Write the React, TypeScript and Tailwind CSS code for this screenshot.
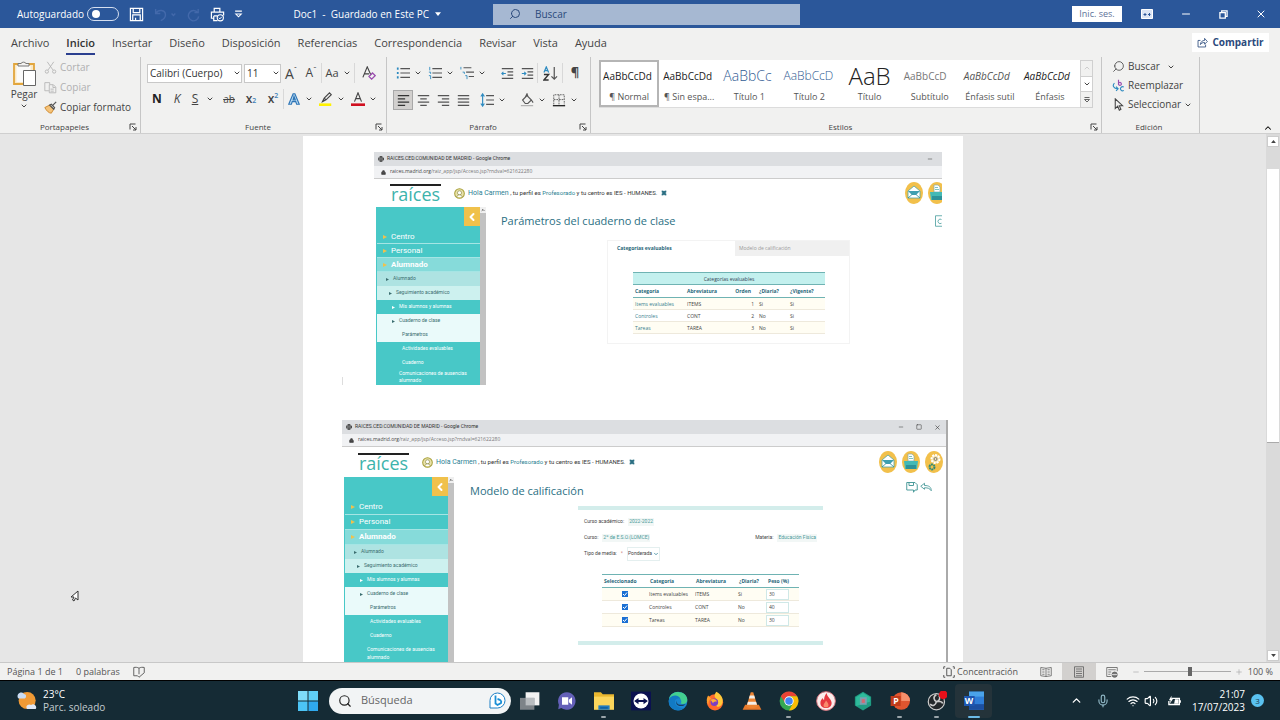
import React from 'react';
import { ChevronDown, ChevronUp, ChevronLeft, Minus, Plus, X, Search, Wifi, Volume2, Mic, Square, Lock, Globe } from 'lucide-react';

interface SvgProps {
  className?: string;
  box?: string;
  children: React.ReactNode;
}

const Svg: React.FC<SvgProps> = ({ className = 'size-4', box = '0 0 16 16', children }) => (
  <svg viewBox={box} className={`shrink-0 ${className}`} fill="none" stroke="currentColor" aria-hidden="true">
    {children}
  </svg>
);

const Chevron = () => <ChevronDown className="size-2 shrink-0 text-[#444]" strokeWidth={3} />;

const Divider = () => <span className="h-5 w-px bg-[#d8d8d8]" />;

interface ToolProps {
  label: string;
  width?: string;
  className?: string;
  children: React.ReactNode;
}

const Tool: React.FC<ToolProps> = ({ label, width = 'w-5', className = '', children }) => (
  <button type="button" aria-label={label} className={`flex h-5 shrink-0 items-center justify-center gap-1 ${width} ${className}`}>
    {children}
  </button>
);

/* ---------- title bar ---------- */

const TitleBar = () => (
  <header className="grid h-7 shrink-0 grid-cols-[493fr_307fr_480fr] items-center bg-[#2b579a] text-[10px] text-white">
    <div className="flex items-center pl-[17px]">
      <span className="w-[70px]">Autoguardado</span>
      <button type="button" role="switch" aria-checked="false" aria-label="Autoguardado" className="flex h-[14px] w-8 items-center rounded-full border border-[#d5dff0] pl-1">
        <span className="size-2 rounded-full bg-white" />
      </button>
      <div className="flex items-center gap-[9px] pl-[10px]">
        <Svg className="size-[15px]">
          <path d="M1.5 1.5h13v13h-13zM4.5 1.5v4.500h7v-4.500M4 14.500v-6h8v6M7 14.500v-3" strokeWidth="1.300" />
        </Svg>
        <Svg className="h-[15px] w-6 text-[#4369ab]" box="0 0 24 16">
          <path d="M2 2v5h5M2.500 6.500c2-4 10-4 10 2 0 3-3 5-5 6M19 7l2 2 2-2" strokeWidth="1.500" />
        </Svg>
        <Svg className="size-[15px] text-[#4369ab]">
          <path d="M13 2v4h-4M12.500 6a5.500 5.500 0 1 0 1 4" strokeWidth="1.500" />
        </Svg>
        <Svg className="size-[15px]">
          <path d="M4.500 5V1.500h6V5M4 12H1.500V5.500h13V9M4 9.500h4M4 9.500v5h4" strokeWidth="1.300" />
          <circle cx="11" cy="11.500" r="3.300" strokeWidth="1.200" />
          <path d="M9.500 11.500l1 1.200 2-2.200" />
        </Svg>
        <Svg className="size-[9px]">
          <path d="M2 2h12M3 7l5 5 5-5z" strokeWidth="1.800" />
        </Svg>
      </div>
      <span className="ml-auto flex items-center gap-[6px] pr-[52px] whitespace-nowrap">
        Doc1&nbsp; -&nbsp; Guardado en Este PC
        <svg viewBox="0 0 8 5" className="h-[4px] w-[6px]" fill="white"><path d="M0 0h8L4 5z" /></svg>
      </span>
    </div>
    <label className="flex h-[21px] items-center gap-[14px] bg-[#a6b8d2] pl-4 text-[#2b4a7c]">
      <Search className="size-3 shrink-0 -scale-x-100" />
      <input type="search" placeholder="Buscar" aria-label="Buscar" className="w-full bg-transparent text-[10px] outline-none placeholder:text-[#2b4a7c]" />
    </label>
    <div className="flex items-center justify-end gap-[19px] pr-[13px]">
      <button type="button" className="h-4 w-[50px] bg-white text-[9px] leading-4 text-[#5c7199]">Inic. ses.</button>
      <Svg className="h-[10px] w-3" box="0 0 12 10">
        <path d="M.5.5h11v9H.5z" fill="#dbe5f5" stroke="#fff" />
        <path d="M2.500 5.500h3M7 5.500h2.500M4 4v3M8.500 4v3" stroke="#2b579a" />
      </Svg>
      <button type="button" aria-label="Minimizar" className="ml-2"><Minus className="size-3" /></button>
      <button type="button" aria-label="Restaurar" className="ml-2">
        <Svg className="size-[9px]" box="0 0 10 10"><path d="M1 3h6v6H1zM3 3V1h6v6H7" strokeWidth="1.400" /></Svg>
      </button>
      <button type="button" aria-label="Cerrar" className="ml-2"><X className="size-3" /></button>
    </div>
  </header>
);

/* ---------- ribbon ---------- */

const tabs = ['Archivo', 'Inicio', 'Insertar', 'Diseño', 'Disposición', 'Referencias', 'Correspondencia', 'Revisar', 'Vista', 'Ayuda'];

const RibbonTabs = () => (
  <nav className="flex h-[29px] shrink-0 items-center gap-[17px] pr-[11px] pl-[11px] text-[11px] text-[#444]">
    {tabs.map((tab) => (
      <a
        key={tab}
        href="#"
        className={tab === 'Inicio' ? 'border-b-2 border-[#2b3f8f] pt-[2px] leading-5 font-semibold text-[#333]' : 'leading-5'}
      >
        {tab}
      </a>
    ))}
    <button type="button" className="ml-auto flex h-[19px] w-[77px] items-center justify-center gap-1 bg-white text-[10px] font-bold text-[#2b4a7c]">
      <Svg className="size-[11px]"><path d="M5 5H1.500v9.500h11V11M5 11c0-4 3-6 6-6V2l4 4.500-4 4V8c-3 0-5 1-6 3z" strokeWidth="1.200" /></Svg>
      Compartir
    </button>
  </nav>
);

interface GroupProps {
  label: string;
  width: string;
  launcher?: boolean;
  children: React.ReactNode;
}

const Group: React.FC<GroupProps> = ({ label, width, launcher = true, children }) => (
  <section className={`flex flex-col border-r border-[#c6c6c6] ${width}`}>
    <div className="h-16">{children}</div>
    <div className="flex items-center pr-[3px] text-center text-[8px] leading-3 text-[#444]">
      <span className="flex-1">{label}</span>
      {launcher && (
        <button type="button" aria-label={`Más opciones de ${label}`}>
          <Svg className="size-2"><path d="M2 13V2h11M6 6l8 8M14 8v6H8" strokeWidth="2" /></Svg>
        </button>
      )}
    </div>
  </section>
);

const Clipboard = () => (
  <Group label="Portapapeles" width="w-[141px]">
    <div className="flex gap-[6px] pl-[10px]">
      <button type="button" className="flex w-[28px] flex-col items-center pt-[3px] text-[10px] leading-[16px] text-[#444]">
        <Svg className="h-[26px] w-[25px]" box="0 0 25 26">
          <path d="M2 4h20v20H2z" fill="#fbe9c5" stroke="#e2a63d" strokeWidth="1.800" />
          <path d="M4.500 6h14v16h-14z" fill="#fafafa" stroke="none" />
          <path d="M6 6V3.500h3a3 3 0 0 1 5 0h3V6z" fill="#f3f2f1" stroke="#777" />
          <path d="M11.500 10.500h12v15h-12z" fill="#fff" stroke="#666" />
        </Svg>
        Pegar
        <Chevron />
      </button>
      <div className="flex flex-col text-[10px] text-[#b0b0b0]">
        <button type="button" className="flex h-5 items-center gap-[3px]">
          <Svg className="size-[13px]"><path d="M4 1l7 10M12 1L5 11" /><circle cx="3.500" cy="13" r="2" /><circle cx="12.500" cy="13" r="2" /></Svg>
          Cortar
        </button>
        <button type="button" className="flex h-5 items-center gap-[3px]">
          <Svg className="size-[13px]"><path d="M6 12H1V2h6v2M6.500 4.500h5l3 3v7h-8zM11 5v3h3M8 10h4M8 12.500h4" /></Svg>
          Copiar
        </button>
        <button type="button" className="flex h-5 items-center gap-[3px] whitespace-nowrap text-[#444]">
          <Svg className="size-[13px]">
            <path d="M1 8l6-3 5 5-3 5c-3 0-6-3-8-7z" fill="#f5c37a" stroke="#c97f1c" />
            <path d="M7 5l2-1 4 4-1 2zM11 5l4-4" stroke="#555" strokeWidth="1.500" />
          </Svg>
          Copiar formato
        </button>
      </div>
    </div>
  </Group>
);

const selectClass = 'h-[19px] appearance-none border border-[#c8c8c8] bg-white pl-[2px] text-[10px] text-[#333] outline-none';

const FontGroup = () => (
  <Group label="Fuente" width="w-[246px]">
    <div className="flex flex-col gap-[6px] pt-[6px] pl-[6px] text-[#444]">
      <div className="flex items-center">
        <label className="relative flex items-center">
          <select aria-label="Fuente" className={`w-[95px] ${selectClass}`}><option>Calibri (Cuerpo)</option></select>
          <span className="pointer-events-none absolute right-px"><Chevron /></span>
        </label>
        <label className="relative ml-[2px] flex items-center">
          <select aria-label="Tamaño" className={`w-[37px] ${selectClass}`}><option>11</option></select>
          <span className="pointer-events-none absolute right-px"><Chevron /></span>
        </label>
        <Tool label="Aumentar tamaño" className="text-[14px]">A<sup className="-ml-1 text-[8px]">ˆ</sup></Tool>
        <Tool label="Disminuir tamaño" className="text-[12px]">A<sup className="-ml-1 text-[8px]">ˇ</sup></Tool>
        <Divider />
        <Tool label="Cambiar mayúsculas" width="w-8" className="text-[11px]">Aa<Chevron /></Tool>
        <Divider />
        <Tool label="Borrar formato" width="w-7">
          <Svg className="size-[14px]">
            <path d="M1 13L6 1l4 9M3 9h5" strokeWidth="1.300" />
            <path d="M8 12l4-4 3 3-4 4z" stroke="#9a4dae" strokeWidth="1.500" />
          </Svg>
        </Tool>
      </div>
      <div className="flex items-center text-[12px]">
        <Tool label="Negrita" className="font-bold text-[#222]">N</Tool>
        <Tool label="Cursiva" className="italic">K</Tool>
        <Tool label="Subrayado" width="w-8" className="gap-2"><span className="underline">S</span><Chevron /></Tool>
        <Tool label="Tachado" className="text-[10px] line-through">ab</Tool>
        <Tool label="Subíndice" width="w-6" className="font-semibold">x<sub className="-ml-1 text-[7px] text-[#3f7fb8]">2</sub></Tool>
        <Tool label="Superíndice" className="font-semibold">x<sup className="-ml-1 text-[7px] text-[#3f7fb8]">2</sup></Tool>
        <Divider />
        <Tool label="Efectos de texto" width="w-8">
          <Svg className="size-[14px]"><path d="M2 14L7 2h2l5 12h-3l-1-3H6l-1 3zM7 9h2.500L8 5z" fill="#bcdcf3" stroke="#2e75b6" strokeWidth="1.300" /></Svg>
          <Chevron />
        </Tool>
        <Tool label="Resaltado" width="w-8">
          <Svg className="size-[14px]">
            <path d="M0 13h14v3H0z" fill="#fff100" stroke="none" />
            <path d="M4 11l2-4 6-6 2 2-6 6zM6 7l2 2" strokeWidth="1.300" />
          </Svg>
          <Chevron />
        </Tool>
        <Tool label="Color de fuente" width="w-8">
          <Svg className="size-[14px]">
            <path d="M0 13h16v3H0z" fill="#d01020" stroke="none" />
            <path d="M4 11L8 1l4 10M5.500 7.500h5" strokeWidth="1.300" />
          </Svg>
          <Chevron />
        </Tool>
      </div>
    </div>
  </Group>
);

const ParagraphGroup = () => (
  <Group label="Párrafo" width="w-[204px]">
    <div className="flex flex-col gap-[7px] pt-[6px] pl-[6px] text-[#555]">
      <div className="flex items-center">
        <Tool label="Viñetas" width="w-8">
          <Svg className="size-[14px]"><path d="M5 3h11M5 8h11M5 13h11" strokeWidth="1.300" /><path d="M1 3h2M1 8h2M1 13h2" stroke="#2e8bc0" strokeWidth="2.500" /></Svg>
          <Chevron />
        </Tool>
        <Tool label="Numeración" width="w-8">
          <Svg className="size-[14px]"><path d="M5 3h11M5 8h11M5 13h11" strokeWidth="1.300" /><path d="M2 1v4M1 7h2v2M1 11h2v4" stroke="#2e8bc0" /></Svg>
          <Chevron />
        </Tool>
        <Tool label="Lista multinivel" width="w-8">
          <Svg className="size-[14px]"><path d="M4 2h9M7 7h9M10 12h6" strokeWidth="1.300" /><path d="M1 1v3M3 7h2v2M6 11h2v4" stroke="#2e8bc0" /></Svg>
          <Chevron />
        </Tool>
        <span className="px-1"><Divider /></span>
        <Tool label="Reducir sangría">
          <Svg className="size-[13px]"><path d="M1 2h14M8 6h7M8 10h7M1 14h14" strokeWidth="1.300" /><path d="M6 8H1M3 6L1 8l2 2" stroke="#2e8bc0" strokeWidth="1.300" /></Svg>
        </Tool>
        <Tool label="Aumentar sangría">
          <Svg className="size-[13px]"><path d="M1 2h14M8 6h7M8 10h7M1 14h14" strokeWidth="1.300" /><path d="M1 8h5M4 6l2 2-2 2" stroke="#2e8bc0" strokeWidth="1.300" /></Svg>
        </Tool>
        <Divider />
        <Tool label="Ordenar" width="w-6">
          <Svg className="size-[15px]">
            <path d="M1 7l2.500-6L6 7M2 5h3" stroke="#2e8bc0" strokeWidth="1.300" />
            <path d="M1 9h5l-5 6h5" stroke="#333" strokeWidth="1.500" />
            <path d="M12 1v13M9 11l3 3 3-3" strokeWidth="1.300" />
          </Svg>
        </Tool>
        <Divider />
        <Tool label="Mostrar todo" width="w-6" className="text-[13px] font-bold text-[#444]">¶</Tool>
      </div>
      <div className="flex items-center">
        <Tool label="Alinear a la izquierda" className="border border-[#a8a8a8] bg-[#d2d0ce]">
          <Svg className="size-[13px]"><path d="M1 2h14M1 6h9M1 10h14M1 14h9" stroke="#333" strokeWidth="1.300" /></Svg>
        </Tool>
        <Tool label="Centrar"><Svg className="size-[13px]"><path d="M1 2h14M4 6h8M1 10h14M4 14h8" strokeWidth="1.300" /></Svg></Tool>
        <Tool label="Alinear a la derecha"><Svg className="size-[13px]"><path d="M1 2h14M6 6h9M1 10h14M6 14h9" strokeWidth="1.300" /></Svg></Tool>
        <Tool label="Justificar"><Svg className="size-[13px]"><path d="M1 2h14M1 6h14M1 10h14M1 14h14" strokeWidth="1.300" /></Svg></Tool>
        <span className="pl-1"><Divider /></span>
        <Tool label="Interlineado" width="w-8">
          <Svg className="size-[14px]"><path d="M7 3h9M7 8h9M7 13h9" strokeWidth="1.300" /><path d="M3 1v14M1 4l2-3 2 3M1 12l2 3 2-3" stroke="#2e8bc0" strokeWidth="1.300" /></Svg>
          <Chevron />
        </Tool>
        <span className="px-1"><Divider /></span>
        <Tool label="Sombreado" width="w-8">
          <Svg className="size-[14px]">
            <path d="M3 8l5-5 5 5-4 4H6zM6 5l2-4 1 3M13 8l2 3" strokeWidth="1.300" />
            <path d="M1 14.500h14" stroke="#999" />
          </Svg>
          <Chevron />
        </Tool>
        <Tool label="Bordes" width="w-8">
          <Svg className="size-[14px]"><path d="M2 13V2h12v11M8 2v11M2 7.500h12" strokeDasharray="2 1" /><path d="M1 14.500h14" stroke="#222" strokeWidth="1.500" /></Svg>
          <Chevron />
        </Tool>
      </div>
    </div>
  </Group>
);

const styles = [
  { name: '¶ Normal', sample: 'AaBbCcDd', look: 'text-[10px] text-[#222]' },
  { name: '¶ Sin espa...', sample: 'AaBbCcDd', look: 'text-[10px] text-[#222]' },
  { name: 'Título 1', sample: 'AaBbCc', look: 'text-[14px] font-light text-[#2f5b93]' },
  { name: 'Título 2', sample: 'AaBbCcD', look: 'text-[12px] font-light text-[#2f5b93]' },
  { name: 'Título', sample: 'AaB', look: 'justify-center text-[24px] font-light text-[#222]' },
  { name: 'Subtítulo', sample: 'AaBbCcD', look: 'text-[10px] text-[#777]' },
  { name: 'Énfasis sutil', sample: 'AaBbCcDd', look: 'text-[10px] italic text-[#555]' },
  { name: 'Énfasis', sample: 'AaBbCcDd', look: 'text-[10px] italic text-[#222]' },
];

const StylesGroup = () => (
  <Group label="Estilos" width="min-w-0 flex-1">
    <div className="flex pt-[3px] pr-2 pl-2">
      <div className="flex h-12 min-w-0 flex-1 border-b border-[#dcdcdc] bg-white">
        {styles.map((style, index) => (
          <button
            key={style.name}
            type="button"
            className={`flex min-w-0 flex-1 flex-col items-center pt-px ${index === 0 ? 'outline-2 -outline-offset-2 outline-[#b5b5b5]' : ''}`}
          >
            <span className={`flex h-[30px] w-[52px] items-center leading-[30px] whitespace-nowrap ${style.look}`}>{style.sample}</span>
            <span className="text-[9px] leading-3 whitespace-nowrap text-[#555]">{style.name}</span>
          </button>
        ))}
      </div>
      <div className="flex h-12 w-[13px] flex-col border border-[#d0d0d0]">
        <button type="button" aria-label="Estilos anteriores" className="flex flex-1 items-center justify-center text-[#bbb]"><ChevronUp className="size-2" /></button>
        <button type="button" aria-label="Estilos siguientes" className="flex flex-1 items-center justify-center border-y border-[#d0d0d0] bg-white"><Chevron /></button>
        <button type="button" aria-label="Más estilos" className="flex flex-1 items-center justify-center text-[#555]">
          <Svg className="size-2"><path d="M3 3h10M3 7l5 5 5-5z" strokeWidth="1.800" /></Svg>
        </button>
      </div>
    </div>
  </Group>
);

const EditingGroup = () => (
  <Group label="Edición" width="w-[98px]" launcher={false}>
    <div className="flex flex-col items-start pl-[10px] text-[10px] text-[#444]">
      <button type="button" className="flex h-[19px] items-center gap-[3px]">
        <Search className="size-[13px] -scale-x-100" strokeWidth={1.500} />Buscar
        <span className="pl-1"><Chevron /></span>
      </button>
      <button type="button" className="flex h-[19px] items-center gap-[3px]">
        <Svg className="size-[13px]">
          <path d="M8 1v6M8 5.500a1.800 1.800 0 1 1 0 1" stroke="#9a4dae" strokeWidth="1.400" />
          <path d="M14.500 10a2.500 2.500 0 1 0 0 4" stroke="#2e8bc0" strokeWidth="1.400" />
          <path d="M3 5c-3 3-1 7 4 7M5 9.500L7.500 12 5 14.500" stroke="#2e8bc0" strokeWidth="1.400" />
        </Svg>
        Reemplazar
      </button>
      <button type="button" className="flex h-[19px] items-center gap-[3px] whitespace-nowrap">
        <Svg className="size-[13px]"><path d="M4 1v12l3-3 2 5 2-1-2-4.500h4z" strokeWidth="1.300" /></Svg>
        Seleccionar<Chevron />
      </button>
    </div>
  </Group>
);

const Ribbon = () => (
  <div className="flex h-[77px] shrink-0 border-b border-[#cfcfcf]">
    <Clipboard />
    <FontGroup />
    <ParagraphGroup />
    <StylesGroup />
    <EditingGroup />
    <div className="flex w-[80px] items-end justify-end pr-[7px]">
      <button type="button" aria-label="Contraer la cinta"><ChevronUp className="size-[10px]" strokeWidth={2.500} /></button>
    </div>
  </div>
);

/* ---------- captured windows ---------- */

const YellowIcon: React.FC<{ kind: 'mail' | 'print' | 'gear' }> = ({ kind }) => (
  <Svg className="h-[22px] w-[18px]" box="0 0 18 22">
    <ellipse cx="9" cy="11" rx="9" ry="11" fill="#f2c04b" stroke="none" />
    {kind === 'mail' && (
      <>
        <path d="M3 9l6-5 6 5v7H3z" fill="#fff" stroke="#4fa3a5" strokeWidth=".8" />
        <path d="M3 9h12l-4 4H7z" fill="#3e9fb0" stroke="none" />
        <path d="M3 16l4-3.500M15 16l-4-3.500" stroke="#2c8f95" strokeWidth=".8" />
      </>
    )}
    {kind === 'print' && (
      <>
        <path d="M6 10V3h4l2 2v5z" fill="#fff" stroke="#8aa" strokeWidth=".7" />
        <path d="M2 10h14l-1 8H3z" fill="#43b9b5" stroke="none" />
        <path d="M4 14h10v4H4z" fill="#2d9299" stroke="none" />
        <path d="M7 5.500h3M7 7.500h4" stroke="#4aa" strokeWidth=".7" />
      </>
    )}
    {kind === 'gear' && (
      <>
        <circle cx="10.500" cy="8" r="4" fill="#f6e3ad" stroke="#fff" strokeWidth="2" strokeDasharray="2 1" />
        <circle cx="10.500" cy="8" r="1.500" stroke="#777" />
        <circle cx="7" cy="16" r="2.500" stroke="#2d8a7a" strokeWidth="2" strokeDasharray="2 .6" />
      </>
    )}
  </Svg>
);

const sideItems = [
  { text: 'Alumnado', look: 'bg-[#aee3e2] pl-[9px] text-[#3c6e70]', open: true },
  { text: 'Seguimiento académico', look: 'bg-[#cdf1ef] pl-3 text-[#3c6e70]', open: true },
  { text: 'Mis alumnos y alumnas', look: 'pl-[15px] text-white', open: true },
  { text: 'Cuaderno de clase', look: 'bg-[#eafafa] pl-[15px] text-[#3c6e70]', open: true },
  { text: 'Parámetros', look: 'bg-[#eafafa] pl-[25px] text-[#3c6e70]', open: false },
  { text: 'Actividades evaluables', look: 'pl-[25px] text-white', open: false },
  { text: 'Cuaderno', look: 'pl-[25px] text-white', open: false },
];

const Sidebar: React.FC<{ tall: boolean }> = ({ tall }) => (
  <nav className="w-[104px] shrink-0 bg-[#48c8c7] pl-px">
    <div className="flex h-[23px] justify-end">
      <button type="button" aria-label="Ocultar menú" className="flex h-[19px] w-4 items-center justify-center bg-[#f0c14b] text-white">
        <ChevronLeft className="size-3" strokeWidth={4} />
      </button>
    </div>
    {['Centro', 'Personal', 'Alumnado'].map((item) => (
      <a
        key={item}
        href="#"
        className={`flex items-center gap-1 border-b border-[#a5e5e4] pl-[6px] text-[8px] text-white ${tall ? 'h-[15px]' : 'h-[14px]'} ${item === 'Alumnado' ? 'bg-[#86dbda] font-bold' : ''}`}
      >
        <svg viewBox="0 0 4 4" className="size-1" fill="#f0c14b"><path d="M0 0l4 2-4 2z" /></svg>
        {item}
      </a>
    ))}
    {sideItems.map((item) => (
      <a key={item.text} href="#" className={`flex h-[14px] items-center gap-1 text-[5px] whitespace-nowrap ${item.look}`}>
        {item.open && <svg viewBox="0 0 4 4" className="size-[3px]" fill="currentColor"><path d="M0 0l4 2-4 2z" /></svg>}
        {item.text}
      </a>
    ))}
    <a href="#" className={`block pr-3 pl-[22px] text-[5px] text-white ${tall ? 'pt-[2px] leading-[8px]' : 'leading-[7px]'}`}>Comunicaciones de ausencias alumnado</a>
  </nav>
);

interface CaptureProps {
  className: string;
  tall?: boolean;
  controls: React.ReactNode;
  icons: React.ReactNode;
  children: React.ReactNode;
}

const Capture: React.FC<CaptureProps> = ({ className, tall = false, controls, icons, children }) => (
  <article className={`flex flex-col overflow-hidden bg-white font-['Roboto','Noto_Sans',sans-serif] ${className}`}>
    <div className="flex h-[14px] shrink-0 items-center gap-[3px] bg-[#dcdee1] pl-1 text-[5px] text-[#333]">
      <Globe className="size-[6px]" strokeWidth={3} />
      RAICES.CED.COMUNIDAD DE MADRID - Google Chrome
      <div className="ml-auto flex items-center gap-3 pr-[5px]">{controls}</div>
    </div>
    <div className="flex h-[13px] shrink-0 items-center gap-1 border-b border-[#ccc] bg-[#f1f2f4] pl-[7px] font-['Open_Sans',sans-serif] text-[5px] text-[#777]">
      <Lock className="size-[5px] text-[#444]" fill="currentColor" strokeWidth={3} />
      <span><span className="text-[#444]">raices.madrid.org</span>/raiz_app/jsp/Acceso.jsp?rndval=621622280</span>
    </div>
    <div className={`flex shrink-0 items-center pl-4 text-[6px] text-[#333] ${tall ? 'h-[30px]' : 'h-7'}`}>
      <span className="w-[51px] border-t-2 border-[#222] text-center font-['Open_Sans',sans-serif] text-[18px] leading-[17px] font-medium text-[#3db3ac]">raíces</span>
      <Svg className="ml-[13px] size-[11px]">
        <circle cx="8" cy="8" r="7" fill="#e9e2a8" stroke="#a8a03c" strokeWidth="1.500" />
        <circle cx="8" cy="7" r="3" fill="#fff" stroke="#8c8a4a" />
        <path d="M4 13c1-4 7-4 8 0" fill="#fff" stroke="#8c8a4a" />
      </Svg>
      <p className="pl-[3px] whitespace-nowrap">
        <span className="text-[7px] text-[#2b7f93]">Hola Carmen</span> , tu perfil es <span className="text-[#2b7f93]">Profesorado</span> y tu centro es IES - HUMANES.
      </p>
      <Svg className="ml-1 size-[6px] text-[#2b6f83]"><path d="M2 2l12 12M14 2L2 14M2 8h12M8 2v12" strokeWidth="3" /></Svg>
      <div className="ml-auto flex gap-[5px]">{icons}</div>
    </div>
    <div className="flex min-h-0 flex-1 pl-[2px]">
      <Sidebar tall={tall} />
      <div className="flex w-[6px] shrink-0 flex-col items-center bg-[#c2c2c2]">
        <div className="flex h-[6px] w-full items-center justify-center bg-[#f0f0f0]"><ChevronUp className="size-1" strokeWidth={4} /></div>
      </div>
      {children}
    </div>
  </article>
);

const headingClass = "font-['Open_Sans',sans-serif] text-[11px] leading-5 text-[#2b6f83]";
const tableClass = "border-collapse text-left font-['Open_Sans',sans-serif] text-[5px] leading-[10px] text-[#444]";

const categories = [
  { name: 'Items evaluables', short: 'ITEMS', order: 1, daily: 'Si', weight: '30' },
  { name: 'Controles', short: 'CONT', order: 2, daily: 'No', weight: '40' },
  { name: 'Tareas', short: 'TAREA', order: 3, daily: 'No', weight: '30' },
];

const ParametersCapture = () => (
  <Capture
    className="h-[233px] w-[568px]"
    controls={<Minus className="mr-1 size-[6px]" />}
    icons={<div className="-mr-1 flex gap-[5px]"><YellowIcon kind="mail" /><YellowIcon kind="print" /></div>}
  >
    <div className="min-w-0 flex-1 pl-[15px]">
      <div className="flex items-center justify-between pt-1">
        <h2 className={headingClass}>Parámetros del cuaderno de clase</h2>
        <Svg className="-mr-1 size-3 text-[#5aa7a7]"><path d="M12 1H2v14h12V9M10 6a3 3 0 1 0 0 5" strokeWidth="1.200" /></Svg>
      </div>
      <div className="mt-[9px] ml-[106px] h-[104px] w-[243px] border border-[#f3f3f3]">
        <div className="flex h-[15px] font-['Open_Sans',sans-serif] text-[5px]">
          <button type="button" className="w-[127px] pl-[9px] text-left font-bold text-[#1f6679]">Categorías evaluables</button>
          <button type="button" className="flex-1 bg-[#f0f0f0] pl-1 text-left text-[#999]">Modelo de calificación</button>
        </div>
        <table className={`mt-4 ml-[25px] w-48 ${tableClass}`}>
          <caption className="h-3 border-t border-[#6fb3b3] bg-[#c3f0ee] text-center leading-3 text-[#345]">Categorías evaluables</caption>
          <thead>
            <tr className="h-[13px] border-y border-[#6fb3b3] text-[#1f6679]">
              <th className="w-[52px] pl-[2px]">Categoría</th>
              <th className="w-[43px] pl-[2px]">Abreviatura</th>
              <th className="w-[27px] pr-1 text-right">Orden</th>
              <th className="w-[31px] pl-1">¿Diaria?</th>
              <th className="pl-1">¿Vigente?</th>
            </tr>
          </thead>
          <tbody>
            {categories.map((row) => (
              <tr key={row.short} className="h-3 border-b border-[#eee9dc] odd:bg-[#fffdf3]">
                <td className="pl-[2px] text-[#39808f]">{row.name}</td>
                <td className="pl-[2px]">{row.short}</td>
                <td className="pr-px text-right">{row.order}</td>
                <td className="pl-1">{row.daily}</td>
                <td className="pl-1">Si</td>
              </tr>
            ))}
          </tbody>
        </table>
      </div>
    </div>
  </Capture>
);

const GradingCapture = () => (
  <Capture
    className="h-[260px] w-[606px] border-r-2 border-[#aaa]"
    tall
    controls={<><Minus className="size-[6px]" /><Square className="size-[6px]" /><X className="size-[7px]" /></>}
    icons={<div className="flex gap-[5px] pr-[3px]"><YellowIcon kind="mail" /><YellowIcon kind="print" /><YellowIcon kind="gear" /></div>}
  >
    <div className="min-w-0 flex-1 pl-4">
      <div className="flex items-center justify-between pt-1">
        <h2 className={headingClass}>Modelo de calificación</h2>
        <div className="flex gap-[2px] pr-[14px] pb-2 text-[#4a9a9a]">
          <Svg className="size-3"><path d="M1 2h11l3 3v7h-3l-2 3v-3H1zM4 2v4h6V2" strokeWidth="1.300" /></Svg>
          <Svg className="size-3"><path d="M6 3L1 7l5 4V9c5 0 7 1 9 4 0-5-3-7-9-7z" strokeWidth="1.200" /></Svg>
        </div>
      </div>
      <div className="mt-[5px] ml-[108px] w-[245px] border-y-4 border-[#d3edeb] px-[6px] pt-1 text-[5px] text-[#444]">
        <p className="flex h-4 items-center gap-1">Curso académico: <span className="bg-[#f2f7f6] px-px text-[#4a9a9a]">2022-2022</span></p>
        <div className="flex h-4 items-center gap-1">
          Curso: <span className="bg-[#f2f7f6] px-px text-[#4a9a9a]">2º de E.S.O.(LOMCE)</span>
          <span className="ml-auto">Materia:</span> <span className="bg-[#f2f7f6] px-px text-[#4a9a9a]">Educación Física</span>
        </div>
        <label className="flex h-4 items-center gap-1">
          Tipo de media: <span className="text-[#c88]">*</span>
          <span className="flex items-center border border-[#e4efef]">
            <select className="h-3 w-[25px] appearance-none bg-white text-[5px] outline-none"><option>Ponderada</option></select>
            <ChevronDown className="size-[6px] text-[#2b7f93]" strokeWidth={3} />
          </span>
        </label>
        <table className={`mt-3 mb-[14px] ml-[18px] w-[197px] ${tableClass}`}>
          <thead>
            <tr className="h-[13px] border-y border-[#6fb3b3] text-[#1f6679]">
              <th className="w-[46px] pl-[2px]">Seleccionado</th>
              <th className="w-[46px] pl-[2px]">Categoría</th>
              <th className="w-[43px] pl-[2px]">Abreviatura</th>
              <th className="w-[29px] pl-[2px]">¿Diaria?</th>
              <th className="pl-[2px]">Peso (%)</th>
            </tr>
          </thead>
          <tbody>
            {categories.map((row) => (
              <tr key={row.short} className="h-[13px] border-b border-[#eee9dc] odd:bg-[#fffdf3]">
                <td>
                  <label className="relative mx-auto block size-[6px]">
                    <input type="checkbox" defaultChecked aria-label={row.name} className="block size-[6px] appearance-none bg-[#1a6fd4]" />
                    <svg viewBox="0 0 6 6" className="pointer-events-none absolute inset-0" fill="none" stroke="#fff"><path d="M1 3l1.500 1.500L5 1.500" /></svg>
                  </label>
                </td>
                <td className="pl-px">{row.name}</td>
                <td className="pl-px">{row.short}</td>
                <td className="pl-px">{row.daily}</td>
                <td><input type="text" defaultValue={row.weight} aria-label={`Peso de ${row.name}`} className="block h-[11px] w-[23px] border border-[#cfe8e7] bg-white pl-[2px] outline-none" /></td>
              </tr>
            ))}
          </tbody>
        </table>
      </div>
    </div>
  </Capture>
);

const Workspace = () => (
  <main className="relative flex min-h-0 flex-1 bg-[#e6e6e6]">
    <div className="min-w-0 flex-1 overflow-hidden">
      <div className="mx-auto mt-[2px] flex w-[660px] flex-col gap-[35px] bg-white pt-4 pl-[39px]">
        <div className="flex items-end gap-[31px]">
          <span className="h-2 w-px bg-[#ddd]" />
          <ParametersCapture />
        </div>
        <GradingCapture />
      </div>
    </div>
    <div className="flex w-[14px] flex-col bg-[#dadada] px-px pt-[2px] pb-px">
      <button type="button" aria-label="Subir" className="flex h-[11px] items-center justify-center border border-[#ccc] bg-white">
        <svg viewBox="0 0 8 5" className="h-[3px] w-[5px]" fill="#444"><path d="M0 5h8L4 0z" /></svg>
      </button>
      <div className="flex-1 pt-[22px]">
        <div className="h-[57%] border-b border-[#aaa] bg-white" />
      </div>
      <button type="button" aria-label="Bajar" className="flex h-[11px] items-center justify-center border border-[#ccc] bg-white">
        <svg viewBox="0 0 8 5" className="h-[3px] w-[5px]" fill="#444"><path d="M0 0h8L4 5z" /></svg>
      </button>
    </div>
    <Svg className="absolute bottom-[60px] left-[69px] h-3 w-[10px]" box="0 0 10 12">
      <path d="M9 1v9L6.500 8 5 11l-1.500-1L5 7H2z" fill="#fff" stroke="#333" />
    </Svg>
  </main>
);

/* ---------- status bar ---------- */

const StatusBar = () => (
  <footer className="flex h-[18px] shrink-0 items-center border-t border-[#c8c8c8] bg-[#f1f1f0] pr-[7px] pl-[7px] text-[9px] text-[#555]">
    <span>Página 1 de 1</span>
    <span className="pl-[13px]">0 palabras</span>
    <Svg className="ml-[13px] size-3"><path d="M8 3C6 1.500 3 1.500 1 2v11h5l2 2 7-6V2c-2-.5-5-.5-7 1zM8 3v8" strokeWidth="1.200" /></Svg>
    <button type="button" className="ml-auto flex items-center gap-[2px]">
      <Svg className="size-3"><path d="M1 4V1h2M13 1h2v3M1 12v3h2M13 15h2v-3M5 3h4l2 2v8H5z" strokeWidth="1.300" /></Svg>
      Concentración
    </button>
    <div className="flex pl-3">
      <Tool label="Modo de lectura" width="w-8" className="h-[17px]">
        <Svg className="size-3"><path d="M8 3L1 2v11l7 1 7-1V2zM8 3v11M3 5h3M3 8h3M3 11h3M10 5h3M10 8h3M10 11h3" /></Svg>
      </Tool>
      <Tool label="Diseño de impresión" width="w-[34px]" className="h-[17px] bg-[#d2d0ce]">
        <Svg className="size-3"><path d="M2 1h12v14H2zM4 4h8M4 7h8M4 10h8M4 13h8" /></Svg>
      </Tool>
      <Tool label="Diseño web" width="w-8" className="h-[17px]">
        <Svg className="size-3"><path d="M7 14H1V2h14v5M3 5h10M3 8h4M3 11h3" /><circle cx="11.500" cy="11.500" r="3.500" fill="#777" /><path d="M8 11.500h7" stroke="#fff" /></Svg>
      </Tool>
    </div>
    <div className="flex items-center gap-1 pl-1 text-[#aaa]">
      <Minus className="size-2" />
      <label className="relative flex w-[87px] items-center">
        <span className="absolute h-px w-full bg-[#aaa]" />
        <span className="absolute left-1/2 h-[9px] w-1 bg-[#666]" />
        <input type="range" aria-label="Zoom" min="10" max="190" defaultValue="100" className="h-3 w-full opacity-0" />
      </label>
      <Plus className="size-2" />
    </div>
    <span className="w-[30px] text-right">100 %</span>
  </footer>
);

/* ---------- taskbar ---------- */

const apps: { name: string; mark?: string; art: React.ReactNode }[] = [
  { name: 'Vista de tareas', art: <><path d="M9 2h22v21H9z" fill="#f3f3f3" /><path d="M0 11h23v19H0z" fill="#7d8388" /><path d="M9 11h14v12H9z" fill="#b9bdc0" /></> },
  { name: 'Chat', art: <><path d="M16 2a14 14 0 1 1-9 25l-5 2 1-7A14 14 0 0 1 16 2z" fill="#6460b8" /><path d="M8 10h10v12H8z" fill="#fff" /><path d="M19 14l5-4v12l-5-4z" fill="#fff" /></> },
  { name: 'Explorador', mark: 'bg-[#9aa5aa] w-[5px]', art: <><path d="M0 2h11l3 3h18v24H0z" fill="#e9b72f" /><path d="M0 9h32v21H0z" fill="#fbd65c" /><path d="M7 23h18v7H7z" fill="#1f7bc0" /><path d="M10 26h12v2H10z" fill="#0f5a94" /></> },
  { name: 'TeamViewer', art: <><path d="M0 1h32v30H0z" fill="#0b1150" /><circle cx="16" cy="16" r="12" fill="#fff" /><path d="M5 16l7-5v3.500h8V11l7 5-7 5v-3.500h-8V21z" fill="#0b1150" /></> },
  { name: 'Edge', art: <><circle cx="16" cy="16" r="15" fill="#1b87d0" /><path d="M2 11C7-3 30-1 31 14c0 6-6 8-11 6 3-3 1-9-5-9-5 0-9 2-13 5z" fill="#43cf8f" /><path d="M2 12c5-7 16-6 18 1-3-2-9-1-9 5 0 6 7 10 15 9C17 35-3 30 2 12z" fill="#127ac4" /><path d="M14 15c-1 4 2 8 9 7l5-1c-5 6-18 3-14-6z" fill="#173c60" /></> },
  { name: 'Firefox', art: <><circle cx="16" cy="18" r="13" fill="#ff6a2b" /><path d="M18 1c8 4 13 12 9 20-3 5-9 6-9 1 5-4 1-8-1-11-3-3-1-7 1-10z" fill="#ffc93a" /><path d="M5 7l5 5c-4 2-5 6-4 10-4-4-4-10-1-15z" fill="#ff9f2e" /><circle cx="15" cy="18" r="6" fill="#7a3fc4" /><path d="M9 14c5-3 10 0 10 3-3-1-6 0-6 3z" fill="#ffae35" /></> },
  { name: 'VLC', art: <><path d="M5 22h22l4 8H1z" fill="#e8792b" /><path d="M14 2h4l7 23c-4 3-14 3-18 0z" fill="#ee8533" /><path d="M12.500 7h7l1.500 5H11zM9.500 17h13l1.500 5H8z" fill="#f2eee9" /></> },
  { name: 'Chrome', mark: 'bg-[#9aa5aa] w-[5px]', art: <><circle cx="16" cy="16" r="15" fill="#35a853" /><path d="M3 8.500A15 15 0 0 1 29 8.500H16L10 19z" fill="#e94335" /><path d="M29 8.500A15 15 0 0 1 16 31l6.500-11.500L19 8.500z" fill="#fbbc05" /><circle cx="16" cy="16" r="7.500" fill="#fff" /><circle cx="16" cy="16" r="6" fill="#4285f4" /></> },
  { name: 'Grabador', art: <><circle cx="16" cy="16" r="15" fill="#fbeceb" stroke="#d9707a" strokeWidth="1.500" /><path d="M17 3c1 7 8 10 8 16 0 11-18 11-18 0 0-4 2-6 4-8 0 2 1 3 2 3 0-4 1-7 4-11z" fill="#e5383f" /><path d="M16 15c3 4 4 5 4 8 0 4-8 4-8 0 0-3 3-5 4-8z" fill="#f98a6b" /></> },
  { name: 'Kaspersky', art: <><path d="M16 1l13 8v14l-13 8-13-8V9z" fill="#1f9c83" /><path d="M16 3l11 7v7L5 24V10z" fill="#2fbb9b" /><path d="M11 10h11v12H11z" fill="#7d9fb0" /><path d="M14 13h5v6h-5z" fill="#d16a72" /></> },
  { name: 'PowerPoint', mark: 'bg-[#9aa5aa] w-[5px]', art: <><circle cx="18" cy="16" r="14" fill="#e0552f" /><path d="M18 2a14 14 0 0 1 14 14H18z" fill="#f58f6b" /><path d="M1 8h16v16H1z" fill="#c13b1b" /><text x="5" y="21" fontSize="14" fontWeight="bold" fill="#fff">P</text></> },
  { name: 'OBS', mark: 'bg-[#9aa5aa] w-[5px]', art: <><circle cx="15" cy="17" r="13" fill="#24282b" stroke="#ccc" strokeWidth="2" /><path d="M15 6c-6 3-4 9 0 11 5 0 9-2 10 3M15 17c-1 6-6 8-10 4M15 17c5-1 7-6 4-10" stroke="#ccc" strokeWidth="2.500" /><circle cx="26" cy="6" r="7" fill="#e8101a" /></> },
  { name: 'Word', mark: 'bg-[#6cbbe8] w-3', art: <><path d="M8 1h24v29H8z" fill="#2f7ed8" /><path d="M8 1h24v8H8z" fill="#4aa3ea" /><path d="M8 21h24v9H8z" fill="#1c4fa0" /><path d="M0 8h17v16H0z" fill="#1d56b0" /><text x="1" y="21" fontSize="14" fontWeight="bold" fill="#fff">W</text></> },
];

const Taskbar = () => (
  <nav className="grid h-10 shrink-0 grid-cols-[1fr_auto_1fr] items-center border-t border-black bg-[#152b35] text-white">
    <div className="flex items-center gap-[6px] pl-4">
      <Svg className="size-[21px]" box="0 0 32 32">
        <circle cx="17" cy="16" r="13" fill="#f09a35" stroke="none" />
        <path d="M3 12c-3-6 5-11 9-6 5 0 4 7 0 7H4z" fill="#c9dbf2" stroke="none" />
        <path d="M17 29c-4-5 3-9 6-6 4-4 10 2 7 6z" fill="#dfe7f5" stroke="none" />
      </Svg>
      <p className="text-[10px] leading-[13px]">23°C<br /><span className="text-[#c4ccd0]">Parc. soleado</span></p>
    </div>
    <div className="flex items-center pl-[10px]">
      <button type="button" aria-label="Inicio">
        <svg viewBox="0 0 20 20" className="size-5">
          <path d="M0 0h9.500v9.500H0z" fill="#7fdcf8" /><path d="M10.500 0H20v9.500h-9.500z" fill="#5fd0f7" />
          <path d="M0 10.500h9.500V20H0z" fill="#4cc4f5" /><path d="M10.500 10.500H20V20h-9.500z" fill="#2fa9ee" />
        </svg>
      </button>
      <label className="ml-[11px] flex h-[26px] w-[182px] items-center gap-[9px] rounded-full bg-[#f2f4f5] pr-[5px] pl-[9px]">
        <Search className="size-[14px] shrink-0 text-[#222]" />
        <input type="search" placeholder="Búsqueda" aria-label="Búsqueda" className="w-full min-w-0 bg-transparent text-[11px] outline-none placeholder:text-[#666]" />
        <Svg className="size-[17px]" box="0 0 17 17">
          <path d="M8.500 1a7.500 7.500 0 1 1 0 15H1V8.500A7.500 7.500 0 0 1 8.500 1z" fill="#fff" stroke="#1d7fc4" />
          <path d="M6.500 3.500v8l2 1.500 3.500-2c1-2-1-3.500-3.500-4" stroke="#1b8fd6" strokeWidth="1.800" />
        </Svg>
      </label>
      <div className="flex">
        {apps.map((app) => (
          <button
            key={app.name}
            type="button"
            aria-label={app.name}
            className={`flex h-[34px] w-[37px] flex-col items-center justify-between pt-[7px] ${app.name === 'Word' ? 'rounded bg-[#24333a]' : ''}`}
          >
            <svg viewBox="0 0 32 32" className="size-5" fill="none">{app.art}</svg>
            <span className={`h-[2px] rounded-full ${app.mark ?? ''}`} />
          </button>
        ))}
      </div>
    </div>
    <div className="flex items-center justify-end pr-4 text-[10px]">
      <ChevronUp className="mr-[13px] size-[13px]" strokeWidth={2.500} />
      <Mic className="mr-4 size-[14px] text-[#8fb6c4]" />
      <Wifi className="mr-1 size-[14px]" />
      <Volume2 className="mr-[10px] size-[14px]" />
      <Svg className="mr-[10px] h-3 w-[14px]" box="0 0 16 12">
        <path d="M4 3h9v7H1V6M14 5v3" strokeWidth="1.500" /><path d="M8 4h4v5H7zM4 0L1 5h2l-1 4 4-6H4z" fill="#fff" stroke="none" />
      </Svg>
      <p className="text-right leading-[13px]">21:07<br />17/07/2023</p>
      <span className="ml-[6px] size-[13px] rounded-full bg-[#5ac2f0] text-center text-[8px] leading-[13px] text-[#17394a]">3</span>
    </div>
  </nav>
);

const App = () => (
  <div className="flex h-screen flex-col overflow-hidden bg-[#f1f1f0] font-['Open_Sans','Noto_Sans',sans-serif]">
    <TitleBar />
    <RibbonTabs />
    <Ribbon />
    <Workspace />
    <StatusBar />
    <Taskbar />
  </div>
);

export default App;
